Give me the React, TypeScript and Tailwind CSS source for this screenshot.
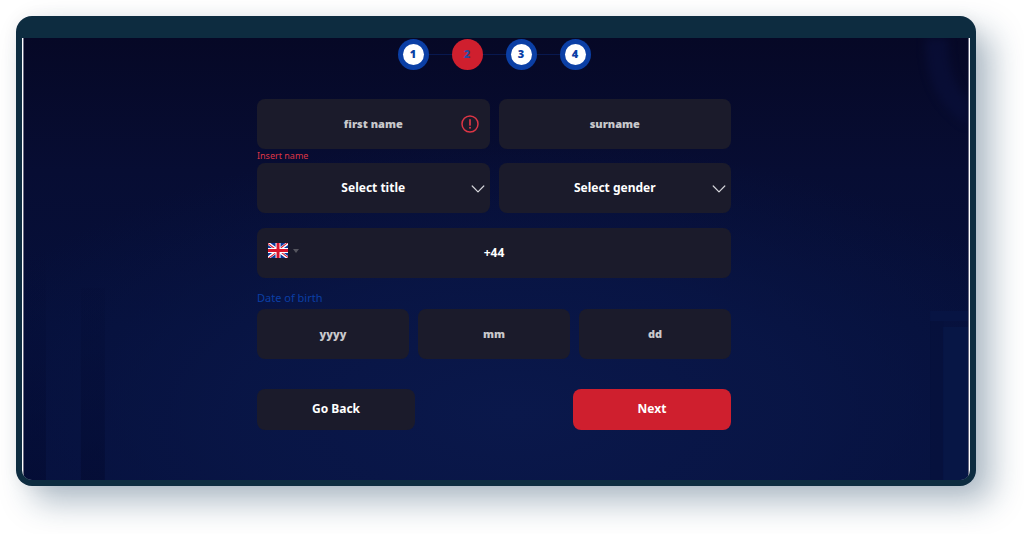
import React from "react";

const field =
  "block h-[50px] w-full appearance-none rounded-lg bg-[#1b1b2b] text-center outline-none";
const placeholderStyle =
  "pb-0.5 text-[11px] font-black text-white placeholder:text-[#c9c9cc] placeholder:opacity-100";

const steps = [1, 2, 3, 4];
const currentStep = 2;

function Steps() {
  return (
    <ol className="flex items-center justify-center">
      {steps.map((n, i) => (
        <li key={n} className="flex items-center">
          {i > 0 && <span className="h-px w-[23px] bg-[#08184f]" />}
          <span
            className={
              n === currentStep
                ? "flex size-[31px] items-center justify-center rounded-full bg-[#cf1f2e]"
                : "flex size-[31px] items-center justify-center rounded-full bg-[#0b3fa5]"
            }
          >
            <span
              className={
                n === currentStep
                  ? "flex size-[21px] items-center justify-center rounded-full pb-0.5 text-[11px] leading-none font-black text-[#2b4a9f]"
                  : "flex size-[21px] items-center justify-center rounded-full bg-white pb-0.5 text-[11px] leading-none font-black text-[#0b3fa5]"
              }
            >
              {n}
            </span>
          </span>
        </li>
      ))}
    </ol>
  );
}

function TextField({ label, error }: { label: string; error?: string }) {
  return (
    <div className="relative">
      <input
        type="text"
        aria-label={label}
        aria-invalid={!!error}
        aria-describedby={error ? "name-error" : undefined}
        placeholder={label}
        className={`${field} ${placeholderStyle}`}
      />
      {error && (
        <svg
          viewBox="0 0 18 18"
          className="absolute top-4 right-[11px] size-[18px]"
          fill="none"
          stroke="#dc3545"
          aria-hidden="true"
        >
          <circle cx="9" cy="9" r="8" strokeWidth="1.5" />
          <path d="M9 4.8v5.2" strokeWidth="1.7" strokeLinecap="round" />
          <circle cx="9" cy="12.8" r="1" fill="#dc3545" stroke="none" />
        </svg>
      )}
    </div>
  );
}

function SelectField({ label, options }: { label: string; options: string[] }) {
  return (
    <div className="relative">
      <select
        aria-label={label}
        defaultValue=""
        className={`${field} text-xs font-bold text-white [text-align-last:center]`}
      >
        <option value="">{label}</option>
        {options.map((o) => (
          <option key={o}>{o}</option>
        ))}
      </select>
      <svg
        viewBox="0 0 14 8"
        className="pointer-events-none absolute top-[22px] right-[5px] h-2 w-3.5"
        fill="none"
        stroke="#d5d5da"
        strokeWidth="1.2"
        strokeLinecap="round"
        strokeLinejoin="round"
        aria-hidden="true"
      >
        <path d="M1.2 1 7 6.8 12.8 1" />
      </svg>
    </div>
  );
}

function UkFlag() {
  return (
    <svg viewBox="0 0 640 480" className="h-[15px] w-5" aria-hidden="true">
      <path fill="#0a3a9c" d="M0 0h640v480H0z" />
      <path
        fill="#fff"
        d="m75 0 244 181L562 0h78v62L400 241l240 178v61h-80L320 301 81 480H0v-60l239-178L0 64V0z"
      />
      <path
        fill="#d8142c"
        d="m424 281 216 159v40L369 281zm-184 20 6 35L54 480H0zM640 0v3L391 191l2-44L590 0zM0 0l239 176h-60L0 42z"
      />
      <path fill="#fff" d="M241 0v480h160V0zM0 160v160h640V160z" />
      <path fill="#d8142c" d="M0 193v96h640v-96zM273 0v480h96V0z" />
    </svg>
  );
}

function Backdrop() {
  return (
    <svg
      viewBox="0 0 946 442"
      preserveAspectRatio="none"
      className="absolute inset-0 size-full"
      aria-hidden="true"
    >
      <defs>
        <linearGradient id="sky" x1="0" y1="0" x2="0" y2="1">
          <stop offset="0" stopColor="#060826" />
          <stop offset="0.3" stopColor="#070d33" />
          <stop offset="0.65" stopColor="#06103b" />
          <stop offset="1" stopColor="#06113e" />
        </linearGradient>
        <radialGradient id="glow" cx="0.52" cy="0.85" r="0.62">
          <stop offset="0" stopColor="#0a184b" />
          <stop offset="0.5" stopColor="#091647" stopOpacity="0.8" />
          <stop offset="1" stopColor="#081443" stopOpacity="0" />
        </radialGradient>
        <linearGradient id="shade" x1="0" y1="0" x2="0" y2="1">
          <stop offset="0" stopColor="#030a30" stopOpacity="0" />
          <stop offset="1" stopColor="#030a30" stopOpacity="0.6" />
        </linearGradient>
        <filter
          id="soft"
          x="-50%"
          y="-50%"
          width="200%"
          height="200%"
          colorInterpolationFilters="sRGB"
        >
          <feGaussianBlur stdDeviation="4" />
        </filter>
      </defs>
      <path fill="url(#sky)" d="M0 0h946v442H0z" />
      <path fill="url(#glow)" d="M0 0h946v442H0z" />
      <path fill="url(#shade)" d="M0 200h22v242H0zM57 250h24v192H57z" />
      <path
        d="M903 0c0 40 12 68 43 88V62c-16-16-20-36-20-62z"
        fill="#0a103c"
        opacity="0.6"
        filter="url(#soft)"
      />
      <path d="M908 273h38v10h-38z" fill="#071443" />
      <path d="M908 283h13v159h-13z" fill="#061039" opacity="0.5" />
      <path d="M921 289h25v153h-25z" fill="#071645" />
    </svg>
  );
}

export default function App() {
  return (
    <main className="bg-white pt-4 pr-12 pb-12 pl-4 font-['Noto_Sans',sans-serif]">
      <div className="rounded-2xl bg-[#0d2c40] px-1.5 pt-[22px] pb-1.5 shadow-[16px_16px_32px_rgba(20,60,90,0.34),0_0_16px_rgba(13,44,64,0.05)]">
        <div className="overflow-hidden rounded-b-[10px] bg-white px-px">
          <div className="relative border-x border-[#6c6e85] pt-px pr-2 pb-[50px] pl-1">
            <Backdrop />
            <form
              className="relative mx-auto w-full max-w-[474px]"
              onSubmit={(e) => e.preventDefault()}
            >
              <Steps />
              <div className="mt-[29px] grid grid-cols-2 gap-x-[9px]">
                <TextField label="first name" error="Insert name" />
                <TextField label="surname" />
                <p
                  id="name-error"
                  className="col-span-2 h-3.5 text-[9px] leading-[13px] text-[#dc3545]"
                >
                  Insert name
                </p>
                <SelectField label="Select title" options={["Mr", "Mrs", "Ms"]} />
                <SelectField label="Select gender" options={["Male", "Female"]} />
              </div>
              <div className="relative mt-[15px]">
                <input
                  type="tel"
                  aria-label="Phone number"
                  defaultValue="+44"
                  className={`${field} pb-0.5 text-xs font-bold text-white`}
                />
                <button
                  type="button"
                  aria-label="Country code"
                  className="absolute top-[15px] left-[11px] flex items-center gap-[5px]"
                >
                  <UkFlag />
                  <svg viewBox="0 0 6 4" className="h-1 w-1.5" aria-hidden="true">
                    <path d="M0 0h6L3 4z" fill="#55555f" />
                  </svg>
                </button>
              </div>
              <fieldset className="mt-3">
                <legend className="mb-[3px] text-[11px] leading-4 text-[#0b3fa5]">
                  Date of birth
                </legend>
                <div className="grid grid-cols-3 gap-x-[9px]">
                  <TextField label="yyyy" />
                  <TextField label="mm" />
                  <TextField label="dd" />
                </div>
              </fieldset>
              <div className="mt-[30px] flex justify-between">
                <button
                  type="button"
                  className="h-[41px] w-1/3 rounded-lg bg-[#1b1b2b] pb-0.5 text-xs font-bold text-white"
                >
                  Go Back
                </button>
                <button
                  type="submit"
                  className="h-[41px] w-1/3 rounded-lg bg-[#cf1f2e] pb-0.5 text-xs font-bold text-white"
                >
                  Next
                </button>
              </div>
            </form>
          </div>
        </div>
      </div>
    </main>
  );
}
